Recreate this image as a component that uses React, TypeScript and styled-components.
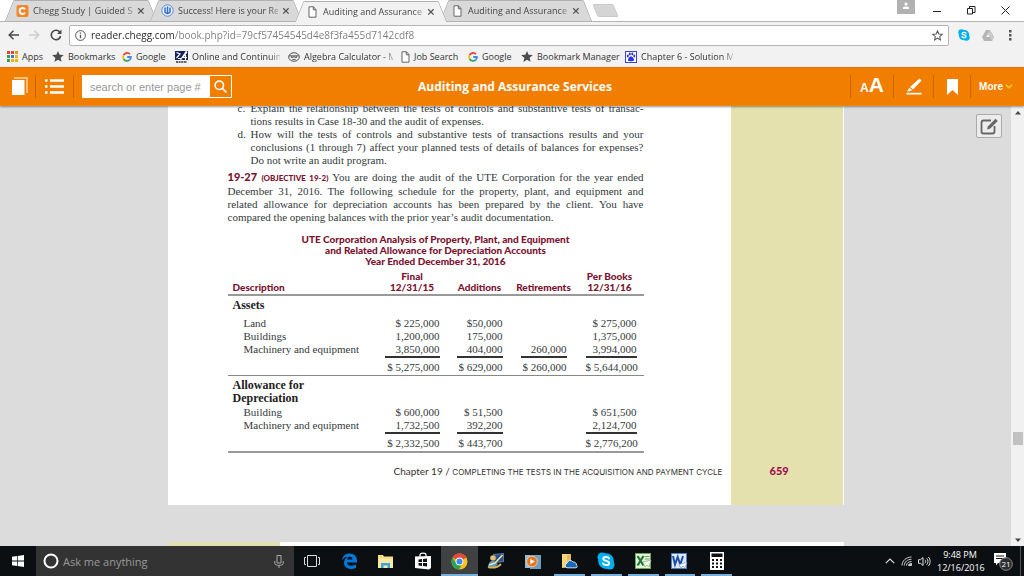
import React from "react";
import styled, { createGlobalStyle, css } from "styled-components";

const ui = `"Open Sans", "Noto Sans", sans-serif`;
const serif = `"Liberation Serif", serif`;
const gill = `Lato, "Open Sans", sans-serif`;

const Global = createGlobalStyle`
  *, *::before, *::after { box-sizing: border-box; }
  html, body { margin: 0; padding: 0; }
  body { font-family: ${ui}; font-size: 10px; color: #333; }
  button { border: 0; padding: 0; margin: 0; background: none; font: inherit; color: inherit; cursor: pointer; }
  a { color: inherit; text-decoration: none; }
  svg { display: block; flex: none; }
`;

const Screen = styled.div`
  display: flex;
  flex-direction: column;
  height: 100vh;
  overflow: hidden;
  background: #fff;
`;

/* ---------- browser chrome ---------- */

const TabStrip = styled.div`
  display: flex;
  align-items: flex-end;
  height: 22px;
  padding: 0 2px 0 4px;
  flex: none;
  border-bottom: 1px solid #b3b3b3;
`;

const Tab = styled.div<{ $active?: boolean }>`
  position: relative;
  z-index: ${(p) => (p.$active ? 2 : 1)};
  display: flex;
  align-items: center;
  gap: 4px;
  width: 153px;
  height: 21px;
  margin-bottom: ${(p) => (p.$active ? "-1px" : "0")};
  padding: 0 12px;
  isolation: isolate;
  & + & { margin-left: -8px; }
  &::before, &::after {
    content: "";
    position: absolute;
    z-index: -1;
    top: 0;
    bottom: 0;
    width: 50%;
    background: ${(p) => (p.$active ? "#f2f2f2" : "#d9d9d9")};
    border-top: 1px solid #b0b0b0;
  }
  &::before { left: 5px; transform: skewX(-22deg); border-left: 1px solid #b0b0b0; border-radius: 2px 0 0 0; }
  &::after { right: 5px; transform: skewX(22deg); border-right: 1px solid #b0b0b0; border-radius: 0 2px 0 0; }
`;

const TabIcon = styled.span`
  display: flex;
  justify-content: center;
  width: 13px;
  flex: none;
`;

const TabTitle = styled.button`
  flex: 1;
  min-width: 0;
  overflow: hidden;
  white-space: nowrap;
  text-align: left;
  font-size: 9px;
  line-height: 16px;
  color: #444;
  mask-image: linear-gradient(to right, #000 90%, transparent 106%);
`;

const TabClose = styled.button`
  width: 8px;
  height: 12px;
  display: flex;
  align-items: center;
  justify-content: center;
`;

const NewTab = styled.button`
  width: 21px;
  height: 13px;
  margin: 0 0 4px 3px;
  background: #d5d5d5;
  border: 1px solid #cacaca;
  border-radius: 2px;
  transform: skewX(22deg);
`;

const WindowButtons = styled.div`
  display: flex;
  align-items: center;
  align-self: stretch;
  margin-left: auto;
`;

const Profile = styled.button`
  display: flex;
  justify-content: center;
  align-self: flex-start;
  width: 18px;
  height: 14px;
  padding-top: 2px;
  margin-right: 5px;
  background: #b1b1b1;
`;

const WindowButton = styled.button`
  display: flex;
  align-items: center;
  justify-content: center;
  width: 34px;
  height: 20px;
`;

const Toolbar = styled.div`
  display: flex;
  align-items: center;
  flex: none;
  height: 27px;
  padding: 0 4px 1px 3px;
  background: #f2f2f2;
`;

const ToolButton = styled.button<{ $w: number }>`
  display: flex;
  align-items: center;
  justify-content: center;
  width: ${(p) => p.$w}px;
  height: 20px;
`;

const AddressBox = styled.form`
  display: flex;
  align-items: center;
  flex: 1;
  gap: 5px;
  height: 21px;
  margin: 0 2px;
  padding: 0 5px;
  background: #fff;
  border: 1px solid #b5b5b5;
  border-radius: 2px;
`;

/* the host name is darker than the rest of the address */
const AddressInput = styled.input`
  flex: 1;
  min-width: 0;
  height: 18px;
  padding: 0;
  border: 0;
  outline: 0;
  font-family: ${ui};
  font-size: 10px;
  color: transparent;
  background: linear-gradient(to right, #222 83px, #7a7a7a 83px);
  background-clip: text;
  -webkit-background-clip: text;
`;

const Bookmarks = styled.nav`
  display: flex;
  align-items: center;
  flex: none;
  gap: 8px;
  height: 18px;
  padding: 0 7px 3px;
  background: #f2f2f2;
`;

const Bookmark = styled.a<{ $w: number; $fade?: boolean }>`
  display: flex;
  align-items: center;
  gap: 4px;
  width: ${(p) => p.$w}px;
  flex: none;
  font-size: 9px;
  line-height: 14px;
  white-space: nowrap;
  ${(p) => p.$fade && css`mask-image: linear-gradient(to right, #000 90%, transparent 104%);`}
`;

/* ---------- reader header ---------- */

const ReaderBar = styled.header`
  position: relative;
  z-index: 3;
  display: grid;
  grid-template-columns: 1fr auto 1fr;
  align-items: center;
  flex: none;
  height: 39px;
  padding: 0 3px 0 9px;
  background: #f27e00;
  border-top: 1px solid #e07400;
  border-bottom: 1px solid #e58a1a;
  box-shadow: 0 1px 2px rgba(0, 0, 0, 0.4);
`;

const BarGroup = styled.div<{ $end?: boolean }>`
  display: flex;
  align-items: center;
  justify-content: ${(p) => (p.$end ? "flex-end" : "flex-start")};
`;

const BarButton = styled.button<{ $w: number }>`
  display: flex;
  align-items: center;
  justify-content: center;
  gap: 2px;
  width: ${(p) => p.$w}px;
  height: 24px;
  color: #fff;
  font-family: "Liberation Sans", sans-serif;
  font-size: 10px;
  font-weight: 700;
`;

const Divider = styled.span`
  width: 1px;
  height: 23px;
  background: #c96500;
`;

const SearchForm = styled.form`
  display: flex;
  width: 150px;
  height: 23px;
  margin-left: 8px;
  padding: 1px;
  background: #fff;
`;

const SearchInput = styled.input`
  flex: 1;
  min-width: 0;
  padding: 0 0 0 7px;
  border: 0;
  outline: 0;
  background: #fff;
  font-family: "Liberation Sans", sans-serif;
  font-size: 11px;
  &::placeholder { color: #999; opacity: 1; }
`;

const SearchButton = styled.button`
  display: flex;
  align-items: center;
  justify-content: center;
  width: 21px;
  background: #f27e00;
`;

const BookTitle = styled.h1`
  margin: 0;
  font-size: 12px;
  font-weight: 700;
  line-height: 18px;
  color: #fff;
`;

const Letters = styled.span`
  display: flex;
  align-items: baseline;
  line-height: 20px;
`;
const SmallA = styled.span`font-size: 12px;`;
const LargeA = styled.span`font-size: 21px;`;

/* ---------- reading area ---------- */

const Reading = styled.main`
  display: flex;
  flex: 1;
  min-height: 0;
  background: #dcdcdc;
`;

const Pages = styled.div`
  position: relative;
  flex: 1;
  overflow: hidden;
`;

const Page = styled.article`
  display: flex;
  width: 676px;
  margin: -20px auto 0;
  padding-right: 1px;
  background: #fff;
`;

const NextPage = styled.div`
  display: flex;
  width: 676px;
  height: 60px;
  margin: 37px auto 0;
  background: #fff;
`;

const Margin = styled.aside`
  flex: none;
  width: 112px;
  background: #e4e1ae;
`;

const PageMargin = styled(Margin)`
  display: flex;
  flex-direction: column;
  justify-content: flex-end;
  padding: 0 0 27px 39px;
`;

const PageNumber = styled.span`
  font-family: ${gill};
  font-size: 11px;
  font-weight: 900;
  line-height: 14px;
  color: #a0114b;
`;

const PageBody = styled.div`
  flex: 1;
  min-width: 0;
  padding: 16px 0 26px 60px;
  font-family: ${serif};
  font-size: 11px;
  line-height: 13px;
  color: #333a3a;
`;

const Column = styled.div`
  width: 416px;
`;

const Questions = styled.ol`
  list-style: none;
  margin: 0 0 3px;
  padding: 0 0 0 10px;
`;

const Question = styled.li`
  display: grid;
  grid-template-columns: 13px 1fr;
`;

const Line = styled.span<{ $full?: boolean }>`
  display: block;
  white-space: nowrap;
  text-align-last: ${(p) => (p.$full ? "justify" : "left")};
`;

const Paragraph = styled.p`
  margin: 0 0 10px;
`;

const Exercise = styled.strong`
  font-family: ${gill};
  font-size: 11px;
  font-weight: 900;
  color: #7b1230;
`;

const Objective = styled(Exercise)`
  font-size: 8px;
`;

const Ledger = styled.table`
  width: 100%;
  table-layout: fixed;
  border-spacing: 0;
  border-bottom: 2px solid #999;
  caption, th {
    font-family: ${gill};
    font-size: 10px;
    font-weight: 900;
    line-height: 11px;
    color: #7b1230;
  }
  caption { padding-bottom: 4px; }
  th, td { padding: 0; }
  thead th { vertical-align: bottom; padding-bottom: 1px; border-bottom: 2px solid #999; }
  thead th:first-child { text-align: left; padding-left: 5px; }
`;

const SectionHead = styled.th<{ $gap?: boolean }>`
  && {
    padding: 3px 0 ${(p) => (p.$gap ? 5 : 1)}px 5px;
    text-align: left;
    font-family: ${serif};
    font-size: 12px;
    font-weight: 700;
    line-height: 13px;
    color: #222;
  }
`;

const RowHead = styled.th`
  && {
    padding-left: 16px;
    text-align: left;
    vertical-align: top;
    white-space: nowrap;
    font-family: ${serif};
    font-size: 11px;
    font-weight: 400;
    line-height: 13px;
    color: #333a3a;
  }
`;

const Amount = styled.td`
  text-align: right;
  white-space: nowrap;
`;

const Value = styled.span<{ $rule?: boolean; $pad: string }>`
  display: block;
  margin: ${(p) => p.$pad};
  border-bottom: ${(p) => (p.$rule ? "2px solid #333" : "0")};
`;

const TotalCell = styled(Amount)<{ $line?: boolean }>`
  && {
    padding: 3px 0 1px;
    border-bottom: ${(p) => (p.$line ? "1px solid #888" : "0")};
  }
`;

const RunningFoot = styled.footer`
  margin-top: 11px;
  padding-left: 166px;
  font-family: ${gill};
  font-size: 10px;
  line-height: 14px;
  white-space: nowrap;
  color: #333;
`;

const Caps = styled.span`
  font-family: Inter, sans-serif;
  font-size: 8px;
`;

const NoteButton = styled.button`
  position: absolute;
  top: 8px;
  right: 9px;
  display: flex;
  align-items: center;
  justify-content: center;
  width: 26px;
  height: 24px;
  background: #ececec;
  border: 1px solid #aaa;
  border-radius: 2px;
`;

const ScrollBar = styled.div`
  display: flex;
  flex-direction: column;
  align-items: center;
  width: 13px;
  background: #f1f1f1;
`;
const ScrollArrow = styled.button`
  display: flex;
  align-items: center;
  justify-content: center;
  width: 13px;
  height: 13px;
`;
const ScrollTrack = styled.div<{ $grow: number }>`
  flex: ${(p) => p.$grow} 1 0;
`;
const ScrollThumb = styled.div`
  width: 10px;
  height: 13px;
  background: #c1c1c1;
`;

/* ---------- taskbar ---------- */

const Taskbar = styled.footer`
  display: flex;
  flex: none;
  height: 30px;
  background: #0c0f12;
  color: #fff;
`;

const StartButton = styled.button`
  display: flex;
  align-items: center;
  justify-content: center;
  width: 36px;
`;

const Cortana = styled.label`
  display: flex;
  align-items: center;
  gap: 4px;
  width: 258px;
  padding: 0 10px 0 7px;
  background: #333;
`;

const CortanaInput = styled.input`
  flex: 1;
  min-width: 0;
  padding: 0;
  border: 0;
  outline: 0;
  background: transparent;
  font-family: ${ui};
  font-size: 11px;
  &::placeholder { color: #9a9a9a; opacity: 1; }
`;

const Apps = styled.div`
  display: flex;
  width: 441px;
`;

const AppButton = styled.button<{ $state?: "running" | "active" }>`
  display: flex;
  flex: 1;
  align-items: center;
  justify-content: center;
  position: relative;
  background: ${(p) => (p.$state === "active" ? "#3f4143" : "none")};
  &::after {
    content: "";
    display: ${(p) => (p.$state ? "block" : "none")};
    position: absolute;
    bottom: 0;
    left: ${(p) => (p.$state === "active" ? 0 : 3)}px;
    right: ${(p) => (p.$state === "active" ? 0 : 3)}px;
    height: 2px;
    background: #76b0dc;
  }
`;

const Tray = styled.div`
  display: flex;
  align-items: center;
  gap: 6px;
  margin-left: auto;
  padding-right: 3px;
`;

const Clock = styled.time`
  font-size: 9px;
  line-height: 13px;
  text-align: center;
  width: 46px;
  white-space: nowrap;
`;

const TrayButton = styled.button`
  display: flex;
`;

const TrayEdge = styled.span`
  width: 1px;
  height: 30px;
  background: #555;
`;

/* ---------- icons ---------- */

const DocIcon = ({ c = "#666" }: { c?: string }) => (
  <svg width="9" height="12" viewBox="0 0 9 12" fill="#fff" stroke={c}>
    <path d="M1 .8h4.500L8 3.500v7.700H1zM5.300.8v3H8" />
  </svg>
);
const StarSolid = () => (
  <svg width="12" height="11" viewBox="0 0 12 11" fill="#4d4d4d">
    <path d="M6 0l1.600 3.800 4.200.3-3.200 2.700 1 4L6 8.700 2.400 10.900l1-4L.2 4.100l4.200-.3z" />
  </svg>
);
const GoogleIcon = () => (
  <svg width="10" height="10" viewBox="0 0 10 10" fill="none" strokeWidth="1.800">
    <path d="M8 2.200A3.900 3.900 0 0 0 1.600 3.200" stroke="#ea4335" />
    <path d="M1.600 3.200a4 4 0 0 0 0 3.600" stroke="#fbbc05" />
    <path d="M1.600 6.800A3.900 3.900 0 0 0 7.600 7.900" stroke="#34a853" />
    <path d="M7.600 7.900A3.600 3.600 0 0 0 8.900 5H5.200" stroke="#4285f4" />
  </svg>
);
const CloseX = () => (
  <svg width="8" height="8" viewBox="0 0 8 8" stroke="#555" strokeWidth="1.300">
    <path d="M1.200 1.200l5.400 5.400M6.600 1.200L1.200 6.600" />
  </svg>
);
const CheggIcon = () => (
  <svg width="13" height="12" viewBox="0 0 13 12">
    <rect x=".5" width="12" height="12" rx="2" fill="#f0872c" />
    <path d="M9 4.200A3 3 0 1 0 9 7.800" fill="none" stroke="#fff" strokeWidth="1.900" />
  </svg>
);
const BlueRound = () => (
  <svg width="13" height="13" viewBox="0 0 13 13" fill="none">
    <circle cx="6.500" cy="6.500" r="5.700" fill="#e9f0fb" stroke="#5a8bd8" />
    <path d="M4 3.500v5M6.500 2.500v7.500M9 3.500v5M4 8.300c1.600 1.500 3.400 1.500 5 0" stroke="#2f6fd0" strokeWidth="1.500" />
  </svg>
);
const AppsGrid = () => (
  <svg width="11" height="11" viewBox="0 0 11 11">
    {["#e5443a", "#e5443a", "#f08c2e", "#3f9c55", "#3b78e7", "#f4b400", "#3f9c55", "#f4b400", "#f4b400"].map((c, i) => (
      <rect key={i} x={(i % 3) * 4} y={Math.floor(i / 3) * 4} width="3" height="3" fill={c} />
    ))}
  </svg>
);
const UmassIcon = () => (
  <svg width="13" height="12" viewBox="0 0 13 12">
    <path d="M0 0h13v9H0z" fill="#18205e" />
    <path d="M1.500 1.500L5 3 1.500 7M3 7.500h3M11.500 0L5.500 9M12 1L7.500 6.500H12M10.500 4v5" stroke="#fff" fill="none" strokeWidth="1.200" />
    <path d="M1 11h11" stroke="#333" strokeWidth="1.400" strokeDasharray="2 .6" />
  </svg>
);
const AlgebraIcon = () => (
  <svg width="12" height="10" viewBox="0 0 12 10" fill="none" stroke="#555">
    <ellipse cx="6" cy="5" rx="5.300" ry="4.300" fill="#eee" />
    <path d="M1 3.800h10M3.400 4v1.500h1.800V4M6.800 4v1.500h1.800V4M4.300 7.500h3.400" strokeWidth=".9" />
  </svg>
);
const PawIcon = () => (
  <svg width="12" height="12" viewBox="0 0 12 12" fill="#2932e1">
    <rect x=".5" y=".5" width="11" height="11" fill="#fff" stroke="#3a44d8" />
    <ellipse cx="2.800" cy="5" rx="1" ry="1.400" />
    <ellipse cx="4.800" cy="3" rx="1" ry="1.400" />
    <ellipse cx="7.300" cy="3" rx="1" ry="1.400" />
    <ellipse cx="9.300" cy="5" rx="1" ry="1.400" />
    <path d="M6 5.200c1.400 0 3 2.400 3 3.600 0 1.600-1.500 1.400-3 1.400s-3 .2-3-1.400c0-1.200 1.600-3.600 3-3.600z" />
  </svg>
);
const SkypeIcon = ({ s }: { s: number }) => (
  <svg width={s} height={s} viewBox="0 0 16 16">
    <circle cx="8" cy="8" r="7" fill="#00aff0" />
    <circle cx="4.600" cy="4.600" r="4.200" fill="#00aff0" />
    <circle cx="11.400" cy="11.400" r="4.200" fill="#00aff0" />
    <path d="M10.700 5.700C10 4 5.500 3.900 5.500 6.100c0 2.300 5.300 1.400 5.300 3.800 0 2.300-4.800 2.300-5.500.2" fill="none" stroke="#fff" strokeWidth="1.700" strokeLinecap="round" />
  </svg>
);

type AppItem = { name: string; state?: "running" | "active"; icon: React.ReactNode };
const apps: AppItem[] = [
  { name: "Task view", icon: (
    <svg width="16" height="12" viewBox="0 0 16 12" fill="none" stroke="#ddd"><path d="M3.500 .5h9v11h-9zM2 2.500H.5v7H2M14 2.500h1.500v7H14" /></svg>
  ) },
  { name: "Edge", icon: (
    <svg width="17" height="16" viewBox="0 0 17 16" fill="#0078d7"><path d="M1 7.200C1.400 3 4.600.4 8.700.4c4.600 0 7.300 3.200 7.300 7.200v1.900H5.900c.2 2.400 2.300 3.300 4.700 3.300 1.600 0 3.100-.5 4.400-1.200v3.100c-1.500.8-3.200 1.200-5.100 1.200C5.700 15.900 3 13.400 3 9.800c0-2.600 1.400-4.800 3.700-6C4 4 2.200 5.400 1 7.200zm5.100-.6h5.400c0-1.800-1-2.900-2.600-2.900S6.300 4.900 6.100 6.600z" /></svg>
  ) },
  { name: "File Explorer", icon: (
    <svg width="17" height="15" viewBox="0 0 17 15"><path d="M1 1h5l1 1.500h9V14H1z" fill="#f7dc83" /><path d="M1 4.500h15V14H1z" fill="#fce9a4" /><path d="M4 14V9h9v5h-2.500v-2.500h-4V14z" fill="#3ba5dc" /></svg>
  ) },
  { name: "Store", icon: (
    <svg width="16" height="18" viewBox="0 0 16 18"><path d="M5 5V3c0-2.500 6-2.500 6 0v2" fill="none" stroke="#fff" strokeWidth="1.200" /><path d="M0 4.500l16-.5v12l-2 1.500L0 16z" fill="#fff" /><path d="M3.500 7.500L7 7v3H3.500zM8 6.900l4-.5V10H8zM3.500 11H7v3l-3.500-.5zM8 11h4v3.600l-4-.5z" fill="#101316" /></svg>
  ) },
  { name: "Chrome", state: "active", icon: (
    <svg width="17" height="17" viewBox="0 0 17 17"><circle cx="8.500" cy="8.500" r="8" fill="#fbc116" /><path d="M8.500 8.500L1.600 4.500a8 8 0 0 1 13.800 0z" fill="#dd4b3e" /><path d="M8.500 4.700h7.100A8 8 0 0 0 1.600 4.500z" fill="#dd4b3e" /><path d="M1.600 4.500a8 8 0 0 0 6.400 12l3.700-6.200-6.500 0z" fill="#2aa255" /><circle cx="8.500" cy="8.500" r="3.900" fill="#fff" /><circle cx="8.500" cy="8.500" r="3" fill="#4486f4" /></svg>
  ) },
  { name: "Remote Assistance", icon: (
    <svg width="18" height="16" viewBox="0 0 18 16"><path d="M6 1l11-1v9l-9 1z" fill="#5d7890" /><path d="M7 2l9-1v7l-8 1z" fill="#27508c" /><circle cx="6" cy="5" r="2.800" fill="#e6bd6d" /><path d="M1 13c1-4 3-6 6-5l4 3-5 4z" fill="#5a94cc" /><path d="M15.500 2L8 10l-6 2" stroke="#f0e4a0" strokeWidth="1.500" fill="none" /><path d="M1 14c4 1 9 1 13-3" stroke="#cdb45e" strokeWidth="2" fill="none" /></svg>
  ) },
  { name: "Media Player", icon: (
    <svg width="16" height="15" viewBox="0 0 16 15"><rect width="11" height="13" y="1" fill="#94bfd9" /><rect x="5" y="1" width="11" height="14" fill="#6f9fc0" /><circle cx="7" cy="7.500" r="5.300" fill="#e57321" stroke="#f6c497" /><path d="M5.300 4.700l4.600 2.800-4.600 2.800z" fill="#fff" /></svg>
  ) },
  { name: "OneDrive", state: "running", icon: (
    <svg width="17" height="16" viewBox="0 0 17 16"><path d="M1 1h8l1 13-9 1z" fill="#f5d67c" /><path d="M6 2l4-1v13H6z" fill="#e3bd5c" /><path d="M6 14.800a2.400 2.400 0 0 1 0-4.600 3.300 3.300 0 0 1 6-1.200 2.800 2.800 0 0 1 3.400 3 1.500 1.500 0 0 1-.4 2.800z" fill="#1769bd" stroke="#fff" strokeWidth=".8" /></svg>
  ) },
  { name: "Skype", state: "running", icon: <SkypeIcon s={18} /> },
  { name: "Excel", state: "running", icon: (
    <svg width="17" height="16" viewBox="0 0 17 16"><rect x=".5" y=".5" width="15" height="15" fill="#e5f2dc" stroke="#68a658" /><path d="M2.500 3l6 9.500M8.500 3l-6 9.500" stroke="#237a3b" strokeWidth="2.300" /><path d="M9.500 3.500h5M10 6h4.500" stroke="#68a658" /><path d="M8 9l8-2-2 7-2-2-2 2z" fill="#f4faf0" stroke="#7bb06c" strokeWidth=".7" /></svg>
  ) },
  { name: "Word", state: "running", icon: (
    <svg width="17" height="16" viewBox="0 0 17 16"><rect x=".5" y=".5" width="15" height="15" fill="#dce8f8" stroke="#4f7fc4" /><path d="M2 3l2 8.500L6.700 4l2.600 7.500L12 3" fill="none" stroke="#1f4fa5" strokeWidth="2" /><path d="M8 11.500l8-2-2 5-2-1.500-2 2z" fill="#fff" stroke="#769bd4" strokeWidth=".7" /></svg>
  ) },
  { name: "Calculator", state: "running", icon: (
    <svg width="14" height="18" viewBox="0 0 14 18"><rect width="14" height="18" fill="#fff" /><rect x="1.500" y="1.500" width="11" height="3.500" fill="#111" /><path d="M2 8h10M2 11.500h10M2 15h10" stroke="#111" strokeWidth="2" strokeDasharray="2 2" /></svg>
  ) },
];

/* ---------- data ---------- */

const tabs = [
  { title: "Chegg Study | Guided So", icon: <CheggIcon /> },
  { title: "Success! Here is your Re", icon: <BlueRound /> },
  { title: "Auditing and Assurance", icon: <DocIcon />, active: true },
  { title: "Auditing and Assurance", icon: <DocIcon /> },
];

const marks = [
  { t: "Apps", w: 37, icon: <AppsGrid /> },
  { t: "Bookmarks", w: 62, icon: <StarSolid /> },
  { t: "Google", w: 45, icon: <GoogleIcon /> },
  { t: "Online and Continuing", w: 105, icon: <UmassIcon />, fade: true },
  { t: "Algebra Calculator - M", w: 105, icon: <AlgebraIcon />, fade: true },
  { t: "Job Search", w: 59, icon: <DocIcon /> },
  { t: "Google", w: 45, icon: <GoogleIcon /> },
  { t: "Bookmark Manager", w: 96, icon: <StarSolid /> },
  { t: "Chapter 6 - Solution M", w: 108, icon: <PawIcon />, fade: true },
];

const pads = ["0 8px", "0 9px", "0 9px", "0 7px 0 10px"];

const AmountRow = ({ head, cells, rule }: { head: string; cells: string[]; rule?: boolean }) => (
  <tr>
    <RowHead scope="row">{head}</RowHead>
    {cells.map((c, i) => (
      <Amount key={i}><Value $pad={pads[i]} $rule={rule && c !== ""}>{c}</Value></Amount>
    ))}
  </tr>
);

const TotalRow = ({ cells, line }: { cells: string[]; line?: boolean }) => (
  <tr>
    <TotalCell $line={line} />
    {cells.map((c, i) => (
      <TotalCell key={i} $line={line}><Value $pad={pads[i]}>{c}</Value></TotalCell>
    ))}
  </tr>
);

export default function App() {
  return (
    <Screen>
      <Global />
      <TabStrip>
        {tabs.map((t, i) => (
          <Tab key={i} $active={t.active}>
            <TabIcon>{t.icon}</TabIcon>
            <TabTitle>{t.title}</TabTitle>
            <TabClose aria-label="Close tab"><CloseX /></TabClose>
          </Tab>
        ))}
        <NewTab aria-label="New tab" />
        <WindowButtons>
          <Profile aria-label="Profile">
            <svg width="8" height="8" viewBox="0 0 8 8" fill="#fff"><circle cx="4" cy="2" r="1.600" /><path d="M1 7V5.500C2 4.200 6 4.200 7 5.500V7z" /></svg>
          </Profile>
          <WindowButton aria-label="Minimize">
            <svg width="8" height="8" viewBox="0 0 8 8" stroke="#222"><path d="M0 4.500h8" /></svg>
          </WindowButton>
          <WindowButton aria-label="Restore">
            <svg width="9" height="9" viewBox="0 0 9 9" fill="none" stroke="#222"><path d="M.5 2.500h5v5.500h-5zM2.500 2.500v-2h5.500v6H5.500" /></svg>
          </WindowButton>
          <WindowButton aria-label="Close">
            <svg width="9" height="9" viewBox="0 0 9 9" stroke="#222"><path d="M.5.5l8 8M8.500.5l-8 8" /></svg>
          </WindowButton>
        </WindowButtons>
      </TabStrip>

      <Toolbar>
        <ToolButton $w={21} aria-label="Back">
          <svg width="11" height="10" viewBox="0 0 11 10" fill="none" stroke="#4a4a4a" strokeWidth="1.500"><path d="M11 5H1.500M5.500.8L1.200 5l4.300 4.200" /></svg>
        </ToolButton>
        <ToolButton $w={21} aria-label="Forward">
          <svg width="11" height="10" viewBox="0 0 11 10" fill="none" stroke="#cdcdcd" strokeWidth="1.500"><path d="M0 5h9.500M5.500.8L9.800 5 5.500 9.200" /></svg>
        </ToolButton>
        <ToolButton $w={22} aria-label="Reload">
          <svg width="12" height="12" viewBox="0 0 12 12"><path d="M10 3.500A4.700 4.700 0 1 0 10.600 7" fill="none" stroke="#4a4a4a" strokeWidth="1.600" /><path d="M11.500.5v4.500H7z" fill="#4a4a4a" /></svg>
        </ToolButton>
        <AddressBox>
          <svg width="11" height="11" viewBox="0 0 11 11" fill="none" stroke="#555"><circle cx="5.500" cy="5.500" r="4.900" /><path d="M5.500 4.700v3.500M5.500 2.500v1.300" strokeWidth="1.300" /></svg>
          <AddressInput aria-label="Address" defaultValue="reader.chegg.com/book.php?id=79cf57454545d4e8f3fa455d7142cdf8" />
          <svg width="11" height="11" viewBox="0 0 12 12" fill="none" stroke="#555" strokeWidth="1.100"><path d="M6 1l1.500 3.400 3.700.3-2.800 2.500.8 3.600L6 8.900l-3.200 1.900.8-3.600L.8 4.700l3.700-.3z" /></svg>
        </AddressBox>
        <ToolButton $w={25} aria-label="Skype"><SkypeIcon s={12} /></ToolButton>
        <ToolButton $w={24} aria-label="Drive">
          <svg width="12" height="11" viewBox="0 0 12 11"><path d="M4 0h4l4 7-2 4H2L0 7z" fill="#b5b5b5" /><path d="M6 3.500L8 7H4z" fill="#eee" /><path d="M8 0L6 3.500 10 11l2-4z" fill="#cacaca" /></svg>
        </ToolButton>
        <ToolButton $w={20} aria-label="Menu">
          <svg width="3" height="12" viewBox="0 0 3 12" fill="#555"><path d="M0 1h2.500v2.500H0zM0 5h2.500v2.500H0zM0 9h2.500v2.500H0z" /></svg>
        </ToolButton>
      </Toolbar>

      <Bookmarks>
        {marks.map((m, i) => (
          <Bookmark key={i} href="#" $w={m.w} $fade={m.fade}>{m.icon}{m.t}</Bookmark>
        ))}
      </Bookmarks>

      <ReaderBar>
        <BarGroup>
          <BarButton $w={26} aria-label="Library">
            <svg width="25" height="19" viewBox="0 0 25 19"><path d="M4 1h13v15" fill="none" stroke="#fbd3a4" strokeWidth="1.500" /><path d="M2 3h12.500v15H2z" fill="#fff" /></svg>
          </BarButton>
          <Divider />
          <BarButton $w={37} aria-label="Contents">
            <svg width="19" height="15" viewBox="0 0 19 15" stroke="#fff" strokeWidth="2.400"><path d="M0 1.500h2.500M5 1.500h14M0 7.500h2.500M5 7.500h14M0 13.500h2.500M5 13.500h14" /></svg>
          </BarButton>
          <Divider />
          <SearchForm>
            <SearchInput aria-label="Search" placeholder="search or enter page #" />
            <SearchButton type="button" aria-label="Go">
              <svg width="13" height="13" viewBox="0 0 13 13" fill="none" stroke="#fff" strokeWidth="1.600"><circle cx="5.300" cy="5.300" r="4.200" /><path d="M8.400 8.400l4 4" /></svg>
            </SearchButton>
          </SearchForm>
        </BarGroup>
        <BookTitle>Auditing and Assurance Services</BookTitle>
        <BarGroup $end>
          <Divider />
          <BarButton $w={42} aria-label="Text size"><Letters><SmallA>A</SmallA><LargeA>A</LargeA></Letters></BarButton>
          <Divider />
          <BarButton $w={39} aria-label="Highlight">
            <svg width="16" height="17" viewBox="0 0 16 17" fill="#fff"><path d="M13.500.5l2 2L7 11.500 4 9z" /><path d="M3.300 9.700l3 2.600L1 13.800z" /><path d="M.5 14.800h15v1.700H.5z" /></svg>
          </BarButton>
          <Divider />
          <BarButton $w={36} aria-label="Bookmark">
            <svg width="11" height="16" viewBox="0 0 11 16" fill="#fff"><path d="M0 0h11v16l-5.500-5L0 16z" /></svg>
          </BarButton>
          <Divider />
          <BarButton $w={50}>
            More
            <svg width="8" height="5" viewBox="0 0 8 5" fill="none" stroke="#ffc61a" strokeWidth="1.600"><path d="M.8.8L4 3.600 7.200.8" /></svg>
          </BarButton>
        </BarGroup>
      </ReaderBar>

      <Reading>
        <Pages>
          <Page>
            <PageBody>
              <Column>
                <Questions>
                  <Question>
                    <span>c.</span>
                    <span>
                      <Line $full>Explain the relationship between the tests of controls and substantive tests of transac-</Line>
                      <Line>tions results in Case 18-30 and the audit of expenses.</Line>
                    </span>
                  </Question>
                  <Question>
                    <span>d.</span>
                    <span>
                      <Line $full>How will the tests of controls and substantive tests of transactions results and your</Line>
                      <Line $full>conclusions (1 through 7) affect your planned tests of details of balances for expenses?</Line>
                      <Line>Do not write an audit program.</Line>
                    </span>
                  </Question>
                </Questions>
                <Paragraph>
                  <Line $full><Exercise>19-27</Exercise>{" "}<Objective>(OBJECTIVE 19-2)</Objective> You are doing the audit of the UTE Corporation for the year ended</Line>
                  <Line $full>December 31, 2016. The following schedule for the property, plant, and equipment and</Line>
                  <Line $full>related allowance for depreciation accounts has been prepared by the client. You have</Line>
                  <Line>compared the opening balances with the prior year’s audit documentation.</Line>
                </Paragraph>
                <Ledger>
                  <caption>
                    UTE Corporation Analysis of Property, Plant, and Equipment<br />
                    and Related Allowance for Depreciation Accounts<br />
                    Year Ended December 31, 2016
                  </caption>
                  <colgroup>
                    <col width="149" /><col width="71" /><col width="64" /><col width="64" /><col width="68" />
                  </colgroup>
                  <thead>
                    <tr>
                      <th scope="col">Description</th>
                      <th scope="col">Final<br />12/31/15</th>
                      <th scope="col">Additions</th>
                      <th scope="col">Retirements</th>
                      <th scope="col">Per Books<br />12/31/16</th>
                    </tr>
                  </thead>
                  <tbody>
                    <tr><SectionHead colSpan={5} $gap>Assets</SectionHead></tr>
                    <AmountRow head="Land" cells={["$ 225,000", "$50,000", "", "$ 275,000"]} />
                    <AmountRow head="Buildings" cells={["1,200,000", "175,000", "", "1,375,000"]} />
                    <AmountRow head="Machinery and equipment" cells={["3,850,000", "404,000", "260,000", "3,994,000"]} rule />
                    <TotalRow line cells={["$ 5,275,000", "$ 629,000", "$ 260,000", "$ 5,644,000"]} />
                  </tbody>
                  <tbody>
                    <tr><SectionHead colSpan={5}>Allowance for<br />Depreciation</SectionHead></tr>
                    <AmountRow head="Building" cells={["$ 600,000", "$ 51,500", "", "$ 651,500"]} />
                    <AmountRow head="Machinery and equipment" cells={["1,732,500", "392,200", "", "2,124,700"]} rule />
                    <TotalRow cells={["$ 2,332,500", "$ 443,700", "", "$ 2,776,200"]} />
                  </tbody>
                </Ledger>
              </Column>
              <RunningFoot>Chapter 19 / <Caps>COMPLETING THE TESTS IN THE ACQUISITION AND PAYMENT CYCLE</Caps></RunningFoot>
            </PageBody>
            <PageMargin><PageNumber>659</PageNumber></PageMargin>
          </Page>
          <NextPage><Margin /></NextPage>
          <NoteButton aria-label="Add note">
            <svg width="19" height="17" viewBox="0 0 19 17" fill="none" stroke="#666"><path d="M11 2.500H3.500C2 2.500 1.500 3 1.500 4.500v9c0 1.500.5 2 2 2h9c1.500 0 2-.5 2-2V8" strokeWidth="1.800" /><path d="M7 11.500l1-3.300L15.500.8l2.300 2.200-7.500 7.500z" fill="#666" stroke="none" /></svg>
          </NoteButton>
        </Pages>
        <ScrollBar>
          <ScrollArrow aria-label="Scroll up"><svg width="6" height="4" viewBox="0 0 6 4" fill="#444"><path d="M3 0l3 3.500H0z" /></svg></ScrollArrow>
          <ScrollTrack $grow={313} />
          <ScrollThumb />
          <ScrollTrack $grow={88} />
          <ScrollArrow aria-label="Scroll down"><svg width="6" height="4" viewBox="0 0 6 4" fill="#444"><path d="M3 4l3-3.500H0z" /></svg></ScrollArrow>
        </ScrollBar>
      </Reading>

      <Taskbar>
        <StartButton aria-label="Start">
          <svg width="12" height="12" viewBox="0 0 12 12" fill="#fff"><path d="M0 1.700L5 1v4.600H0zM5.700.9L12 0v5.600H5.700zM0 6.400h5V11l-5-.7zM5.700 6.400H12V12l-6.300-.9z" /></svg>
        </StartButton>
        <Cortana>
          <svg width="16" height="16" viewBox="0 0 16 16" fill="none" stroke="#fff" strokeWidth="2"><circle cx="8" cy="8" r="6.500" /></svg>
          <CortanaInput aria-label="Ask me anything" placeholder="Ask me anything" />
          <svg width="10" height="13" viewBox="0 0 10 13" fill="none" stroke="#aaa"><path d="M3 .5h4v7.500H3zM.8 6v2.500c0 2.500 8.400 2.500 8.400 0V6M5 10.500V13" /></svg>
        </Cortana>
        <Apps>
          {apps.map((a) => (
            <AppButton key={a.name} aria-label={a.name} $state={a.state}>{a.icon}</AppButton>
          ))}
        </Apps>
        <Tray>
          <TrayButton aria-label="Show hidden icons">
            <svg width="10" height="6" viewBox="0 0 10 6" fill="none" stroke="#ddd" strokeWidth="1.200"><path d="M.8 5.200L5 1l4.200 4.200" /></svg>
          </TrayButton>
          <TrayButton aria-label="Network">
            <svg width="11" height="10" viewBox="0 0 11 10" fill="none" stroke="#ccc"><path d="M1 9.500C1 5 5 1 10.500 1M3.300 9.500c0-3.500 3.200-6.200 7.200-6.200M5.500 9.500c0-2.300 2.200-4 5-4" /><path d="M7.500 9.500c0-1.500 1.500-2 3-2v2z" fill="#ccc" /></svg>
          </TrayButton>
          <TrayButton aria-label="Volume">
            <svg width="13" height="11" viewBox="0 0 13 11" fill="none" stroke="#ddd"><path d="M.5 3.700h2L5 1.500v8L2.500 7.300h-2zM7 3.800c.8 1 .8 2.400 0 3.400M8.700 2.300c1.700 1.800 1.700 4.600 0 6.400M10.400 1c2.300 2.500 2.300 6.500 0 9" /></svg>
          </TrayButton>
          <Clock>9:48 PM<br />12/16/2016</Clock>
          <TrayButton aria-label="21 notifications">
            <svg width="25" height="19" viewBox="0 0 25 19"><path d="M5 1h12v10H9l-2 2.500V11H5z" fill="#fff" /><path d="M7 4h8M7 6.500h8" stroke="#111" /><circle cx="17" cy="12" r="6.300" fill="#2b2d2f" stroke="#888" /><text x="17" y="15" textAnchor="middle" fontFamily="Open Sans" fontSize="8" fill="#fff">21</text></svg>
          </TrayButton>
          <TrayEdge />
        </Tray>
      </Taskbar>
    </Screen>
  );
}
